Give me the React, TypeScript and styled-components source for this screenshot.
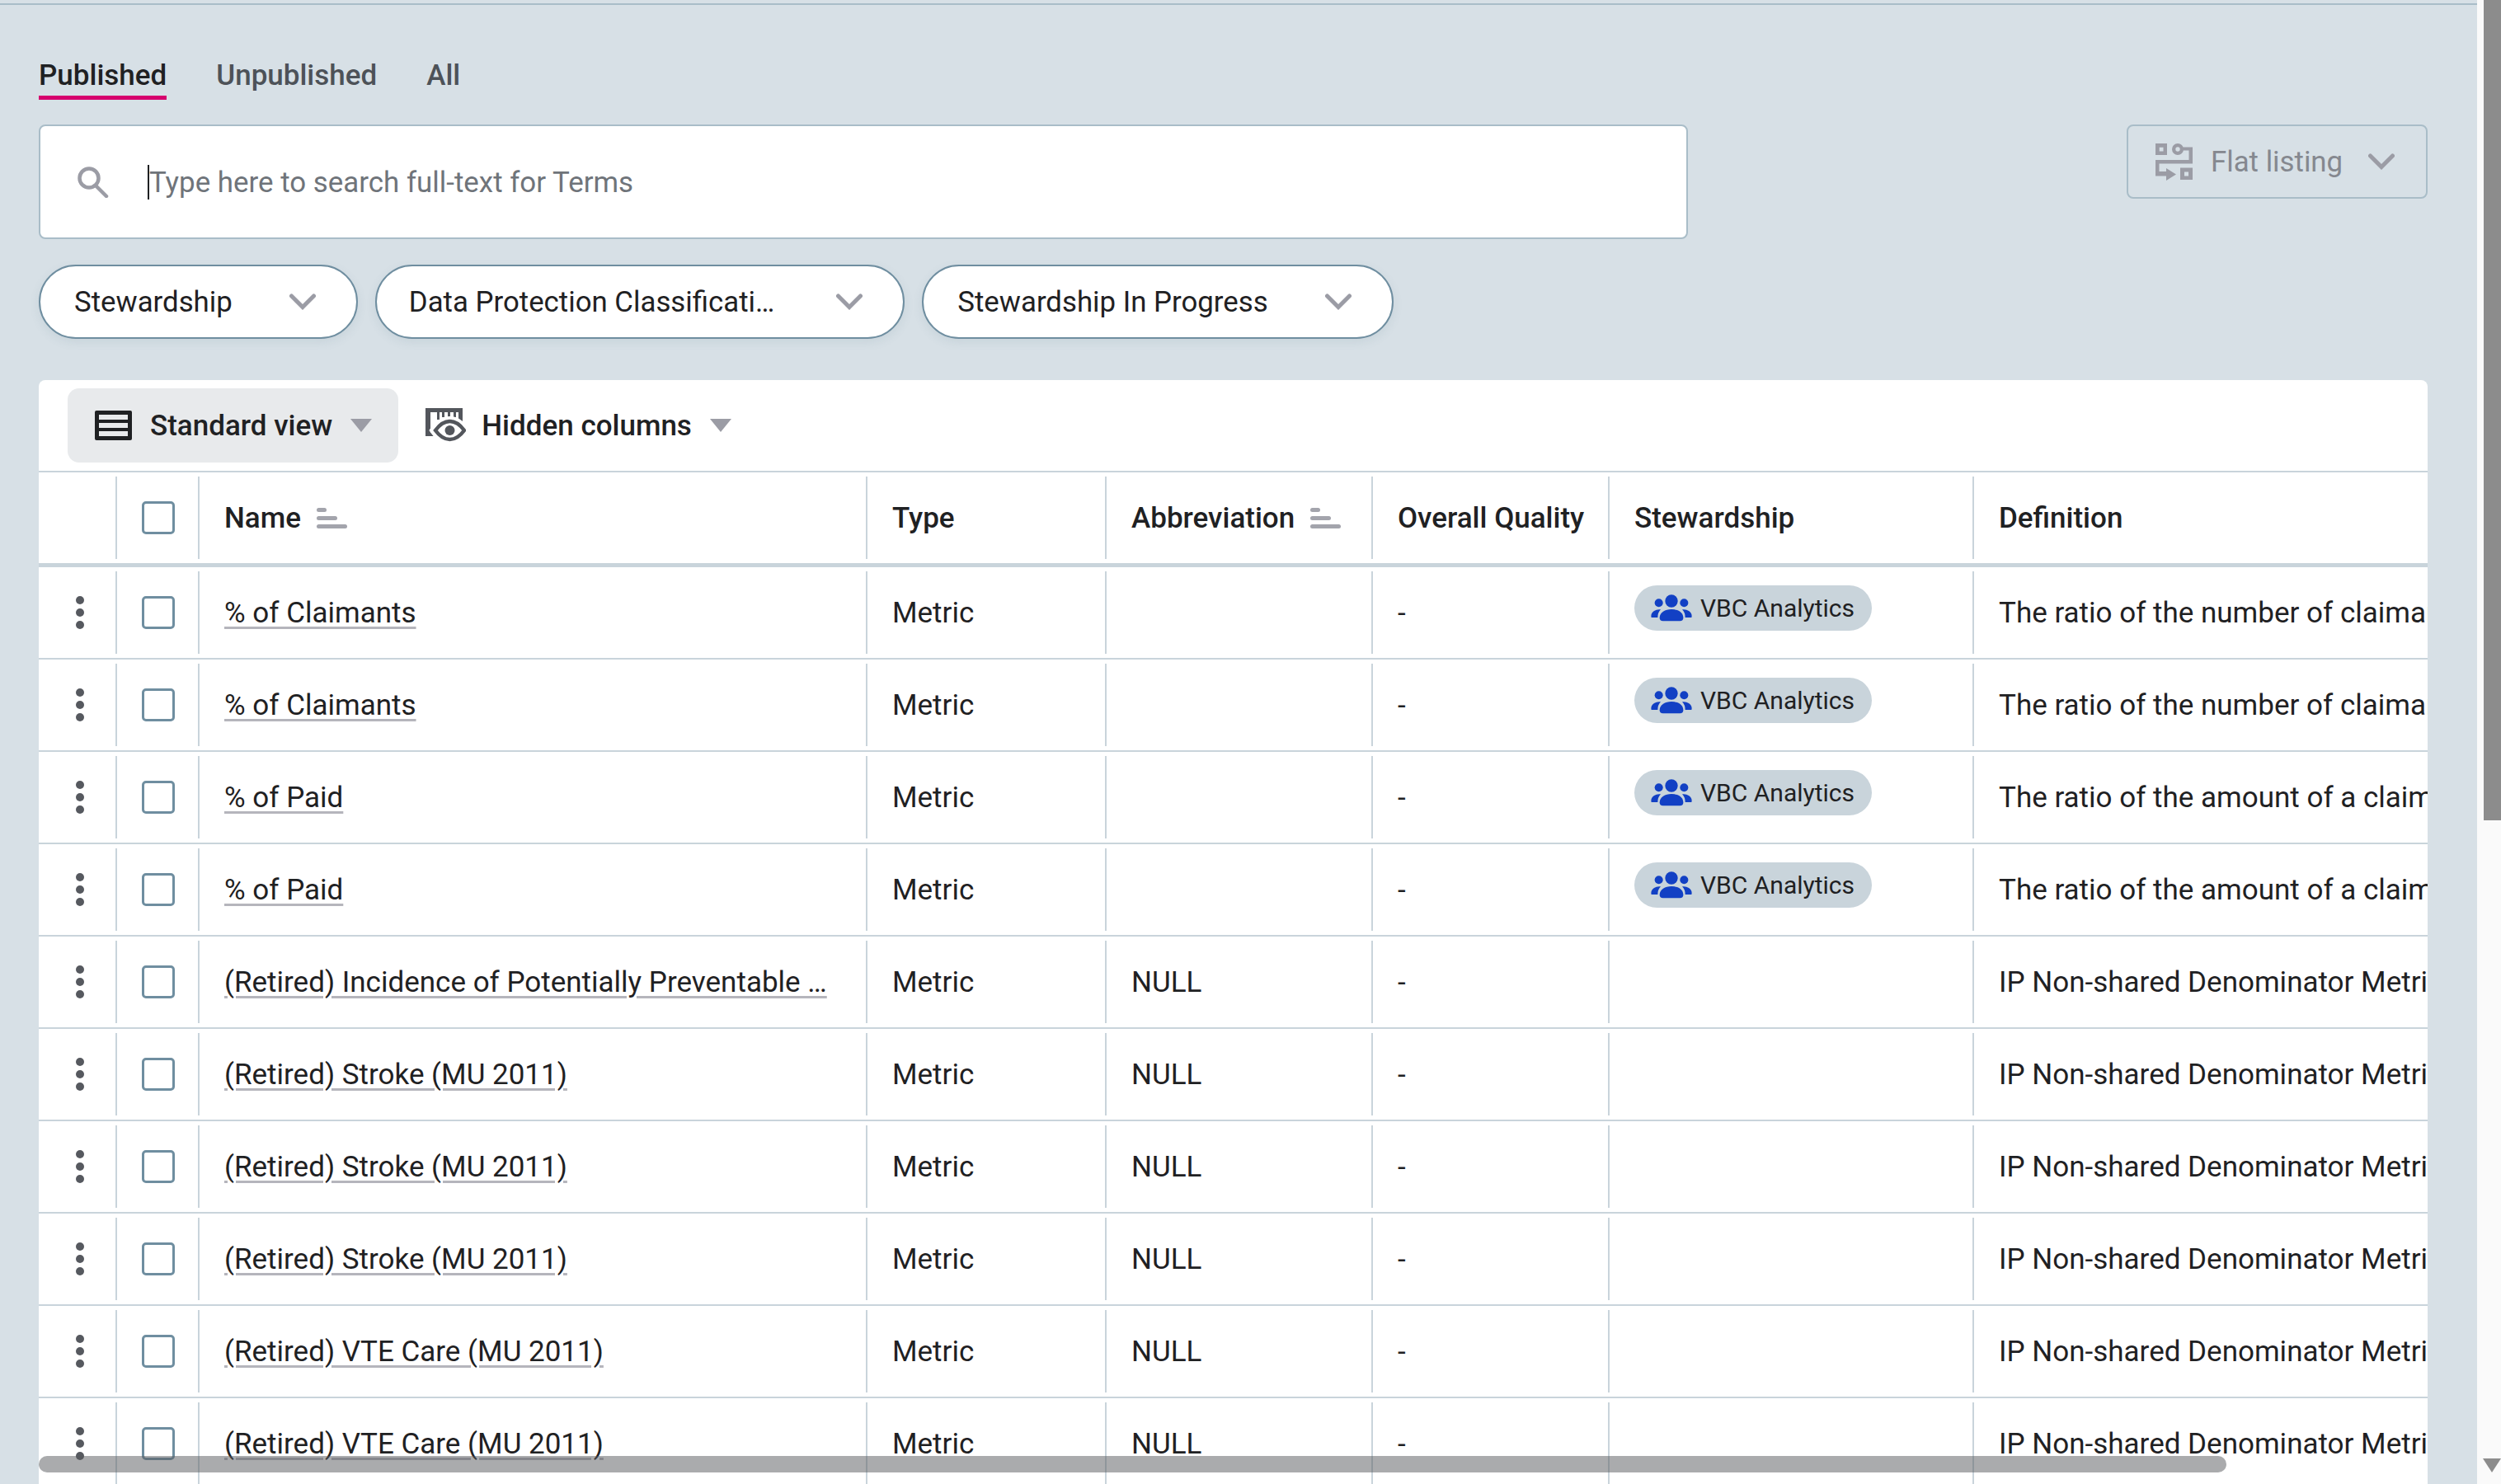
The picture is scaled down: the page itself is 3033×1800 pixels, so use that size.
import React from 'react'
import styled, { createGlobalStyle } from 'styled-components'

const GlobalStyle = createGlobalStyle`
    html, body {
        margin: 0;
        padding: 0;
        background: #d7e0e6;
        font-family: Roboto, "Liberation Sans", sans-serif;
        color: #1f2123;
    }
`

const COLUMNS = [95, 100, 810, 290, 323, 287, 442, 550]

interface ITerm {
    name: string;
    abbreviation?: string;
    steward?: boolean;
    definition: string;
}

const CLAIMANTS = 'The ratio of the number of claimants to the total number of members'
const PAID = 'The ratio of the amount of a claim paid to the total amount billed'
const IP = 'IP Non-shared Denominator Metric for the measure'

const terms: ITerm[] = [
    { name: '% of Claimants', steward: true, definition: CLAIMANTS },
    { name: '% of Claimants', steward: true, definition: CLAIMANTS },
    { name: '% of Paid', steward: true, definition: PAID },
    { name: '% of Paid', steward: true, definition: PAID },
    { name: '(Retired) Incidence of Potentially Preventable …', abbreviation: 'NULL', definition: IP },
    { name: '(Retired) Stroke (MU 2011)', abbreviation: 'NULL', definition: IP },
    { name: '(Retired) Stroke (MU 2011)', abbreviation: 'NULL', definition: IP },
    { name: '(Retired) Stroke (MU 2011)', abbreviation: 'NULL', definition: IP },
    { name: '(Retired) VTE Care (MU 2011)', abbreviation: 'NULL', definition: IP },
    { name: '(Retired) VTE Care (MU 2011)', abbreviation: 'NULL', definition: IP },
]

const Chevron = () => (
    <svg width="32" height="20" viewBox="0 0 32 20" fill="none">
        <path d="M2.500 3L16 16.500 29.500 3" stroke="#9b9ca5" strokeWidth="5" strokeLinecap="round" />
    </svg>
)

const SearchIcon = () => (
    <svg width="38" height="38" viewBox="0 0 38 38" fill="none" stroke="#9b9ca5" strokeWidth="4.500" strokeLinecap="round">
        <circle cx="14" cy="14" r="11.500" />
        <path d="M23 24l12 12" />
    </svg>
)

const FlatListingIcon = () => (
    <svg width="45" height="45" viewBox="0 0 45 45" fill="#9b9ca5">
        <path fillRule="evenodd" d="M0 0h14v14H0zM4.700 4.700v4.800h4.800V4.700z" />
        <path fillRule="evenodd" d="M27 0a7 7 0 1 0 0 14 7 7 0 0 0 0-14zm0 4.300a2.700 2.700 0 1 1 0 5.400 2.700 2.700 0 0 1 0-5.400z" />
        <path d="M31 4.500h14V24.500H4.500V34H13v-4l12 7.500L13 45v-5.500H0V20h40.500V8.500H31z" />
        <path fillRule="evenodd" d="M30 29.500h15V44H30zM35 34.500v5h5v-5z" />
    </svg>
)

const StandardViewIcon = () => (
    <svg width="45" height="36" viewBox="0 0 45 36">
        <rect width="45" height="36" rx="2" fill="#1f2123" />
        <rect x="5" y="5" width="35" height="6" fill="#e8eaec" />
        <rect x="5" y="15" width="35" height="6" fill="#e8eaec" />
        <rect x="5" y="25" width="35" height="6" fill="#e8eaec" />
    </svg>
)

const HiddenColumnsIcon = () => (
    <svg width="49" height="42" viewBox="0 0 49 42">
        <path fill="#53565c" d="M0 0h45v16h-5V5h-3v6h-3V5h-4v6h-3V5h-4v6h-3V5h-3v9h-3v-9H6v25h4v4H0z" />
        <path d="M10.500 27Q19 15 29.500 15T48 27Q40 39 29.500 39T10.500 27z" fill="#fff" stroke="#fff" strokeWidth="10" />
        <path d="M12 27Q20 16 29.500 16T47 27Q39 38 29.500 38T12 27z" fill="#fff" stroke="#53565c" strokeWidth="4.500" />
        <circle cx="29.500" cy="27" r="6" fill="#53565c" />
    </svg>
)

const GroupIcon = () => (
    <svg width="50" height="33" viewBox="0 0 150 99" fill="#1240c4">
        <circle cx="75" cy="24" r="23" />
        <circle cx="29" cy="31" r="15" />
        <circle cx="121" cy="31" r="15" />
        <path d="M32 85C32 65 52 54 75 54s43 11 43 31q0 12-12 12H44q-12 0-12-12z" />
        <path d="M2 84q-4-14 10-24 10-7 24-5-11 11-11 29z" />
        <path d="M148 84q4-14-10-24-10-7-24-5 11 11 11 29z" />
    </svg>
)

const SortIcon = () => (
    <SortBars>
        <SortBar $width={12} />
        <SortBar $width={25} />
        <SortBar $width={37} />
    </SortBars>
)

const DotsIcon = () => (
    <DotsSvg width="10" height="40" viewBox="0 0 10 40" fill="#56595f">
        <circle cx="5" cy="5" r="5" />
        <circle cx="5" cy="20" r="5" />
        <circle cx="5" cy="35" r="5" />
    </DotsSvg>
)

const App = () => {
    return (
        <Page>
            <GlobalStyle />
            <Main>
                <Tabs>
                    <Tab $active>Published</Tab>
                    <Tab>Unpublished</Tab>
                    <Tab>All</Tab>
                </Tabs>

                <SearchRow>
                    <SearchBox>
                        <SearchIcon />
                        <Caret />
                        <Placeholder>Type here to search full-text for Terms</Placeholder>
                    </SearchBox>
                    <ListingButton>
                        <FlatListingIcon />
                        <span>Flat listing</span>
                        <Chevron />
                    </ListingButton>
                </SearchRow>

                <Filters>
                    <FilterPill $left={41} $gap={69}><span>Stewardship</span><Chevron /></FilterPill>
                    <FilterPill $left={39} $gap={75}><span>Data Protection Classificati…</span><Chevron /></FilterPill>
                    <FilterPill $left={41} $gap={69}><span>Stewardship In Progress</span><Chevron /></FilterPill>
                </Filters>

                <Card>
                    <Toolbar>
                        <ViewButton $selected>
                            <StandardViewIcon />
                            <ViewLabel $left={22}>Standard view</ViewLabel>
                            <Triangle />
                        </ViewButton>
                        <ViewButton>
                            <HiddenColumnsIcon />
                            <ViewLabel $left={19}>Hidden columns</ViewLabel>
                            <Triangle />
                        </ViewButton>
                    </Toolbar>

                    {/* Table */}
                    <HeaderRow>
                        <Cell $width={COLUMNS[0]} />
                        <Cell $width={COLUMNS[1]} $center><Checkbox /></Cell>
                        <Cell $width={COLUMNS[2]} $pad>Name<SortIcon /></Cell>
                        <Cell $width={COLUMNS[3]} $pad>Type</Cell>
                        <Cell $width={COLUMNS[4]} $pad>Abbreviation<SortIcon /></Cell>
                        <Cell $width={COLUMNS[5]} $pad>Overall Quality</Cell>
                        <Cell $width={COLUMNS[6]} $pad>Stewardship</Cell>
                        <Cell $width={COLUMNS[7]} $pad $last>Definition</Cell>
                    </HeaderRow>

                    {terms.map((term, i) => (
                        <Row key={i}>
                            <Cell $width={COLUMNS[0]} $center><DotsIcon /></Cell>
                            <Cell $width={COLUMNS[1]} $center><Checkbox /></Cell>
                            <Cell $width={COLUMNS[2]} $pad><TermLink>{term.name}</TermLink></Cell>
                            <Cell $width={COLUMNS[3]} $pad>Metric</Cell>
                            <Cell $width={COLUMNS[4]} $pad>{term.abbreviation}</Cell>
                            <Cell $width={COLUMNS[5]} $pad>-</Cell>
                            <Cell $width={COLUMNS[6]} $pad>
                                {term.steward && (
                                    <Chip>
                                        <GroupIcon />
                                        VBC Analytics
                                    </Chip>
                                )}
                            </Cell>
                            <Cell $width={COLUMNS[7]} $pad $last>{term.definition}</Cell>
                        </Row>
                    ))}

                    <HorizontalThumb />
                </Card>
            </Main>

            <VerticalScroll>
                <VerticalThumb />
                <ArrowDown />
            </VerticalScroll>
        </Page>
    )
}

export default App

const Page = styled.div`
    display: flex;
    width: 3033px;
    height: 1800px;
    overflow: hidden;
`

const Main = styled.main`
    width: 3004px;
    height: 1800px;
    box-sizing: border-box;
    padding: 0 60px 0 47px;
    border-top: 2px solid #a9bdc8;
    margin-top: 4px;
    overflow: hidden;
`

const Tabs = styled.div`
    display: flex;
    gap: 60px;
    height: 115px;
    padding-top: 61px;
    box-sizing: border-box;
`

const Tab = styled.div<{ $active?: boolean }>`
    height: 54px;
    box-sizing: border-box;
    font-size: 35px;
    line-height: 50px;
    font-weight: 500;
    color: ${(p) => (p.$active ? '#1f2123' : '#4d5258')};
    border-bottom: ${(p) => (p.$active ? '5px solid #d6006e' : 'none')};
`

const SearchRow = styled.div`
    display: flex;
    justify-content: space-between;
    align-items: flex-start;
    margin-top: 30px;
`

const SearchBox = styled.div`
    display: flex;
    align-items: center;
    width: 2000px;
    height: 139px;
    box-sizing: border-box;
    padding-left: 45px;
    background: #fff;
    border: 2px solid #a9bdc8;
    border-radius: 8px;
`

const Caret = styled.div`
    width: 2px;
    height: 42px;
    margin-left: 47px;
    background: #1f2123;
`

const Placeholder = styled.span`
    margin-top: 1px;
    font-size: 34.9px;
    color: #6f747a;
`

const ListingButton = styled.div`
    display: flex;
    align-items: center;
    gap: 22px;
    width: 365px;
    height: 90px;
    box-sizing: border-box;
    padding-left: 33px;
    border: 2px solid #a9bdc8;
    border-radius: 8px;
    font-size: 34.8px;
    color: #85888f;

    svg:last-child {
        margin-left: 9px;
    }
`

const Filters = styled.div`
    display: flex;
    gap: 21px;
    margin-top: 31px;
`

const FilterPill = styled.div<{ $left: number; $gap: number }>`
    display: flex;
    align-items: center;
    gap: ${(p) => p.$gap}px;
    height: 90px;
    box-sizing: border-box;
    padding: 0 49px 0 ${(p) => p.$left}px;
    background: #fff;
    border: 2px solid #6f8ea0;
    border-radius: 45px;
    font-size: 34.8px;
    box-shadow: 0 4px 12px rgba(90, 120, 140, 0.12);
`

const Card = styled.section`
    position: relative;
    margin-top: 50px;
    width: 2897px;
    height: 1400px;
    overflow: hidden;
    background: #fff;
    border-radius: 8px 8px 0 0;
`

const Toolbar = styled.div`
    display: flex;
    align-items: center;
    height: 112px;
    box-sizing: border-box;
    padding: 0 0 0 35px;
    border-bottom: 2px solid #c9d4db;
`

const ViewButton = styled.div<{ $selected?: boolean }>`
    display: flex;
    align-items: center;
    height: 90px;
    box-sizing: border-box;
    padding: 0 32px 0 33px;
    border-radius: 14px;
    background: ${(p) => (p.$selected ? '#e8eaec' : 'transparent')};
`

const ViewLabel = styled.span<{ $left: number }>`
    margin: 0 22px 0 ${(p) => p.$left}px;
    font-size: 35px;
    font-weight: 500;
`

const Triangle = styled.div`
    width: 0;
    height: 0;
    border-left: 13px solid transparent;
    border-right: 13px solid transparent;
    border-top: 16px solid #9b9ca5;
`

const HeaderRow = styled.div`
    display: flex;
    height: 115px;
    box-sizing: border-box;
    border-bottom: 5px solid #c9d4db;
    font-weight: 500;
    font-size: 35px;
`

const Row = styled.div`
    display: flex;
    height: 112px;
    box-sizing: border-box;
    border-bottom: 2px solid #c9d4db;
    font-size: 35px;
`

const Cell = styled.div<{ $width: number; $pad?: boolean; $center?: boolean; $last?: boolean }>`
    display: flex;
    align-items: center;
    flex: none;
    width: ${(p) => p.$width}px;
    height: 100px;
    margin: 5px 0;
    box-sizing: border-box;
    overflow: hidden;
    white-space: nowrap;
    padding-left: ${(p) => (p.$pad ? '30px' : '0')};
    justify-content: ${(p) => (p.$center ? 'center' : 'flex-start')};
    border-right: ${(p) => (p.$last ? 'none' : '2px solid #c9d4db')};
`

const DotsSvg = styled.svg`
    margin-left: 7px;
`

const Checkbox = styled.div`
    width: 40px;
    height: 40px;
    margin-left: 2px;
    box-sizing: border-box;
    border: 3px solid #6f8ea0;
    border-radius: 5px;
`

const SortBars = styled.div`
    display: flex;
    flex-direction: column;
    gap: 5px;
    margin-left: 19px;
`

const SortBar = styled.div<{ $width: number }>`
    width: ${(p) => p.$width}px;
    height: 5px;
    border-radius: 2.5px;
    background: #a3a4ac;
`

const TermLink = styled.a`
    color: #1f2123;
    text-decoration: underline;
    text-decoration-color: #b5b5bc;
    text-decoration-thickness: 3px;
    text-underline-offset: 5px;
`

const Chip = styled.div`
    display: flex;
    align-items: center;
    gap: 10px;
    width: 288px;
    height: 55px;
    box-sizing: border-box;
    padding-left: 20px;
    margin-bottom: 11px;
    border-radius: 28px;
    background: #c9d4db;
    font-size: 30px;
`

const HorizontalThumb = styled.div`
    position: absolute;
    left: 0;
    top: 1305px;
    width: 2653px;
    height: 20px;
    border-radius: 10px;
    background: rgba(85, 87, 92, 0.5);
`

const VerticalScroll = styled.aside`
    display: flex;
    flex-direction: column;
    align-items: flex-end;
    width: 29px;
    height: 1800px;
    background: #fafafa;
`

const VerticalThumb = styled.div`
    width: 21px;
    height: 995px;
    background: #8c8c8c;
`

const ArrowDown = styled.div`
    margin-top: auto;
    margin-bottom: 14px;
    width: 0;
    height: 0;
    border-left: 11px solid transparent;
    border-right: 11px solid transparent;
    border-top: 17px solid #8c8c8c;
`
